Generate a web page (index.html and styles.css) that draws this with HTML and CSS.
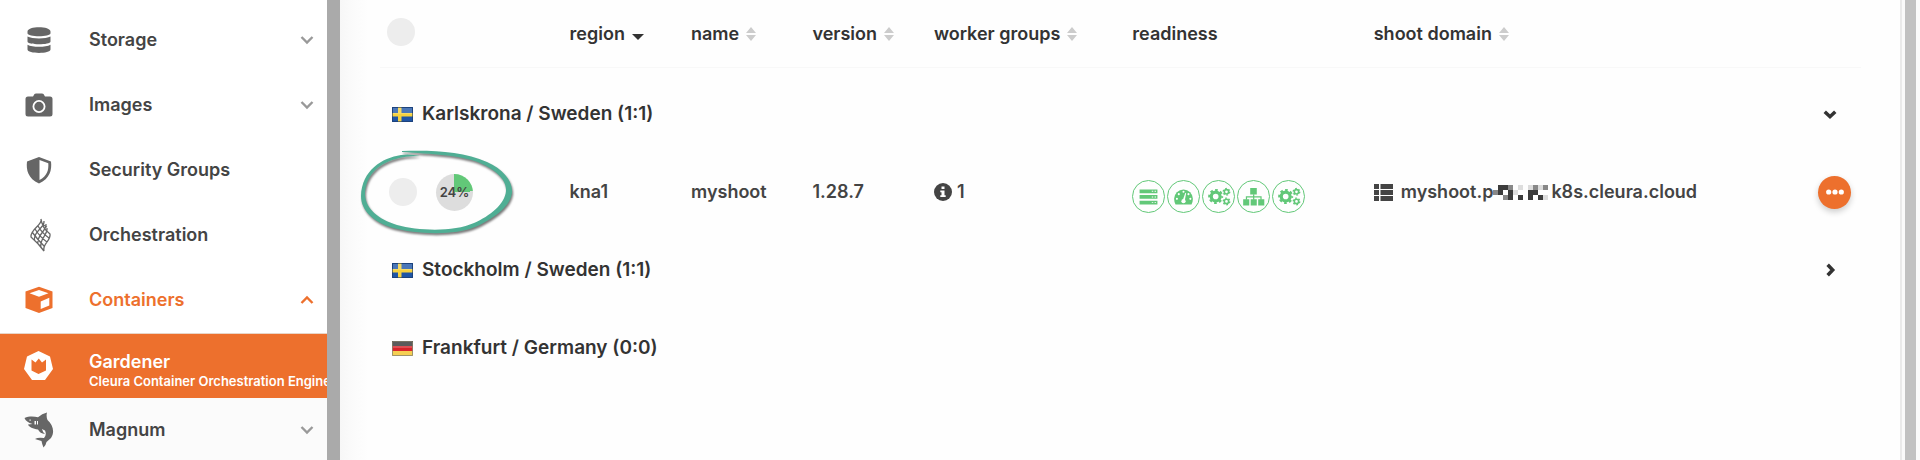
FILE: index.html
```html
<!DOCTYPE html>
<html lang="en">
<head>
<meta charset="utf-8">
<title>Gardener shoots</title>
<link rel="stylesheet" href="styles.css">
</head>
<body>
<svg class="defs" aria-hidden="true">
  <symbol id="chev" viewBox="0 0 14 10"><path d="M1.500 2 7 7.500 12.500 2" fill="none" stroke="currentColor" stroke-width="2.400"/></symbol>
  <symbol id="sort" viewBox="0 0 10 14"><path d="M5 0 10 6H0ZM0 8H10L5 14Z" fill="currentColor"/></symbol>
  <symbol id="se" viewBox="0 0 21 15"><path fill="#1f55a5" d="M0 0h21v15H0z"/><path fill="#f6d23f" d="M6 0h3.500v15H6zM0 6h21v3.500H0z"/><path fill="#fff" opacity=".2" d="M1 1h19v6H1z"/><path fill="none" stroke="#1a3560" stroke-opacity=".6" d="M.5.5h20v14H.5z"/></symbol>
  <symbol id="de" viewBox="0 0 21 15"><path fill="#333" d="M0 0h21v5H0z"/><path fill="#d8232a" d="M0 5h21v5H0z"/><path fill="#f5cf52" d="M0 10h21v5H0z"/><path fill="#fff" opacity=".2" d="M1 1h19v6H1z"/><path fill="none" stroke="#8a8470" stroke-opacity=".8" d="M.5.5h20v14H.5z"/></symbol>
  <symbol id="gears" viewBox="0 0 33 33">
    <g fill="none" stroke="currentColor">
      <circle cx="13.500" cy="16.500" r="4.700" stroke-width="3.400"/><circle cx="13.500" cy="16.500" r="6.800" stroke-width="2.400" stroke-dasharray="2.800 2.540" stroke-dashoffset="1.400"/>
      <circle cx="25" cy="11.500" r="2.300" stroke-width="1.700"/><circle cx="25" cy="11.500" r="3.500" stroke-width="1.400" stroke-dasharray="1.800 1.865"/>
      <circle cx="25" cy="21.800" r="2.300" stroke-width="1.700"/><circle cx="25" cy="21.800" r="3.500" stroke-width="1.400" stroke-dasharray="1.800 1.865"/>
    </g>
  </symbol>
</svg>
<div class="app">
  <nav class="side" aria-label="Services">
    <a class="item" href="#storage"><svg class="ico" viewBox="0 0 30 36"><path d="M3.500 9.500C3.500 3.800 26.500 3.800 26.500 9.500V11.300C26.500 15.300 3.500 15.300 3.500 11.300ZM3.500 14.600C8 17.200 22 17.200 26.500 14.600V19.500C26.500 23.200 3.500 23.200 3.500 19.500ZM3.500 22.700C8 25.500 22 25.500 26.500 22.700V27.500C26.500 32 3.500 32 3.500 27.500Z"/></svg><span class="label">Storage</span><svg class="chev"><use href="#chev"/></svg></a>
    <a class="item" href="#images"><svg class="ico" viewBox="0 0 30 36"><path fill-rule="evenodd" d="M4 9.500H9L10.500 7Q11 6.500 12 6.500H18Q19 6.500 19.500 7L21 9.500H26Q28.500 9.500 28.500 12V27Q28.500 29.500 26 29.500H4Q1.500 29.500 1.500 27V12Q1.500 9.500 4 9.500ZM15 13A6.500 6.500 0 1 0 15 26A6.500 6.500 0 1 0 15 13ZM15 14.800A4.700 4.700 0 1 1 15 24.200A4.700 4.700 0 1 1 15 14.800Z"/></svg><span class="label">Images</span><svg class="chev"><use href="#chev"/></svg></a>
    <a class="item" href="#security"><svg class="ico" viewBox="0 0 30 36"><path fill-rule="evenodd" d="M15 5 27 9.500C28 18 26 26.500 15 31.500C4 26.500 2 18 3 9.500ZM15.500 8V28C23 24 24.800 18.500 24.300 11.300Z"/></svg><span class="label">Security Groups</span></a>
    <a class="item" href="#orchestration"><svg class="ico" viewBox="0 0 30 36"><g fill="none" stroke="currentColor" stroke-width="1.300"><path d="M17 2C19 8 6 12 7 20Q15 27 20 34C18 27 27 24 26 17Q18 11 17 2M20 4C21 11 9 14 10.500 23M22 7C23 14 12 18 14 27M23 11C24 18 15 22 17 30M14 9Q18 16 25 21M11 12Q16 20 23 25M8 15Q14 23 20 29M18 6Q20 9 23 10"/></g></svg><span class="label">Orchestration</span></a>
    <a class="item open" href="#containers"><svg class="ico" viewBox="0 0 30 36"><path fill-rule="evenodd" d="M15 4.800 28.500 9.500V26L15 31 1.500 26V9.500ZM15 8 5.500 11.300 15 14.800 24.500 11.300ZM16.700 19.500V27L25.300 23.500V15.800Z"/></svg><span class="label">Containers</span><svg class="chev up"><use href="#chev"/></svg></a>
    <a class="item active" href="#gardener" aria-current="page"><svg class="ico" viewBox="0 0 30 36"><path fill-rule="evenodd" d="M14.500 3 26 8.500 29 21 21 32H8L0 21 3 8.500ZM7.500 11.500V22.500L14.500 26 22 22.500V11.500L18 14.500 14.800 10.500 11.500 14.500Z"/></svg><span class="label">Gardener<small>Cleura Container Orchestration Engine</small></span></a>
    <a class="item sub" href="#magnum"><svg class="ico" viewBox="0 0 30 36"><path fill-rule="evenodd" d="M.5 6C5 4 10 4.500 14 5.200Q18 1.500 23 .5 22 4 23.500 8C29 13 31 20 27 26L22.500 30Q22 33 19.500 35.500 18 32 17.500 29Q14 28 11 27Q14 25 20 26Q23 23 21 18.500L18 17Q18.500 20 21 22 16 21.500 14 17.500C9 17 5 15 4 12.500L8.500 12Q2 10 .5 6ZM10.500 9V12.500H12V9ZM13 9V12.500H14V9ZM5.500 7.500V8.700H6.700V7.500Z"/></svg><span class="label">Magnum</span><svg class="chev"><use href="#chev"/></svg></a>
  </nav>
  <div class="bar"></div>
  <main class="main">
    <table class="shoots">
      <colgroup><col class="c-sel"><col class="c-s"><col class="c-s"><col class="c-s"><col class="c-wg"><col class="c-rd"><col><col class="c-act"></colgroup>
      <thead>
        <tr>
          <th class="sel"><input type="checkbox" class="tick" aria-label="Select all"></th>
          <th><button class="sort on">region<svg class="caret" viewBox="0 0 12 6"><path d="M0 0H12L6 6Z" fill="currentColor"/></svg></button></th>
          <th><button class="sort">name<svg><use href="#sort"/></svg></button></th>
          <th><button class="sort">version<svg><use href="#sort"/></svg></button></th>
          <th><button class="sort">worker groups<svg><use href="#sort"/></svg></button></th>
          <th>readiness</th>
          <th><button class="sort">shoot domain<svg><use href="#sort"/></svg></button></th>
          <th></th>
        </tr>
      </thead>
      <tbody>
        <tr class="spacer"><td colspan="8"></td></tr>
        <tr class="group">
          <td colspan="7"><div class="place"><svg class="flag"><use href="#se"/></svg>Karlskrona / Sweden (1:1)</div></td>
          <td><button class="toggle" aria-label="Collapse Karlskrona"><svg viewBox="0 0 12 12"><path d="M1.500 4 6 8.300 10.500 4"/></svg></button></td>
        </tr>
        <tr class="shoot">
          <td class="sel"><div class="status"><input type="checkbox" class="tick" aria-label="Select myshoot"><span class="pie">24%</span>
            <svg class="mark" viewBox="0 0 156 90"><path fill="#4fae94" d="M42 3C70 2 103 3 127 14C143 21 153 33 152 45C150 60 131 72 115 79C94 88 55 86 33 80C13 74 1 62 1 48C2 22 22 10 41 7Q49 5.500 60 8Q44 8 36 11C17 16 5 29 5 47C6 61 18 71 37 77C59 83 94 84 114 75C130 68 145 56 146 43C147 31 134 21 120 15C101 7 70 6 42 4Z"/></svg></div></td>
          <td>kna1</td>
          <td>myshoot</td>
          <td>1.28.7</td>
          <td><div class="row tight"><svg class="info" viewBox="0 0 18 18"><circle cx="9" cy="9" r="9" fill="currentColor"/><path fill="#fff" d="M7.500 3.500h3v2.500h-3zM6.300 7.500h4.200v4.700h1.200V14H6.300v-1.800h1.200V9.300H6.300z"/></svg>1</div></td>
          <td><div class="ready">
            <svg viewBox="0 0 33 33"><path fill="currentColor" fill-rule="evenodd" d="M7 9h19v4H7zM7 15h19v4H7zM7 21h19v4H7zM20 10.500v1h1.500v-1zM23 10.500v1h1.500v-1zM20 16.500v1h1.500v-1zM23 16.500v1h1.500v-1zM20 22.500v1h1.500v-1zM23 22.500v1h1.500v-1z"/></svg>
            <svg viewBox="0 0 33 33"><path fill="currentColor" d="M8 25Q6.500 22 6.500 19A10 10 0 0 1 26.500 19Q26.500 22 25 25Z"/><g fill="#fff"><circle cx="9.500" cy="19" r="1.100"/><circle cx="11.500" cy="14" r="1.100"/><circle cx="16.500" cy="11.500" r="1.100"/><circle cx="21.800" cy="14" r="1.100"/><circle cx="23.800" cy="19" r="1.100"/><circle cx="16.500" cy="21.500" r="2.300"/><path d="M15.500 21 18.500 12.500 19.300 13 17.700 21.500Z"/></g></svg>
            <svg><use href="#gears"/></svg>
            <svg viewBox="0 0 33 33"><path fill="currentColor" d="M13 7.500h7v7h-7zM5.500 19.500h6.500V26H5.500zM13.500 19.500h6.500V26h-6.500zM21.500 19.500h6.500V26h-6.500z"/><path fill="none" stroke="currentColor" stroke-width="1.300" d="M16.700 14v6M9 20v-3.200h15.500V20"/></svg>
            <svg><use href="#gears"/></svg>
          </div></td>
          <td><div class="row"><svg class="list" viewBox="0 0 19 17"><path fill="currentColor" d="M0 0h5v5H0zM6.500 0H19v5H6.500zM0 6h5v5H0zM6.500 6H19v5H6.500zM0 12h5v5H0zM6.500 12H19v5H6.500z"/></svg><span class="host">myshoot.p<svg class="mosaic" viewBox="0 0 55 15" shape-rendering="crispEdges"><path fill="#3c3c3c" d="M5 0h10v5H5zM5 5h5v5H5zM15 5h5v10h-5zM35 5h10v5H35zM35 10h5v5h-5zM45 10h5v5h-5zM25 10h5v5h-5z"/><path fill="#888" d="M0 5h5v5H0zM15 0h5v5h-5zM10 10h5v5h-5zM40 0h5v5h-5zM50 0h5v5h-5z"/><path fill="#ddd" d="M25 0h5v5h-5zM20 5h5v5h-5zM35 0h5v5h-5zM45 0h5v5h-5zM50 10h5v5h-5z"/></svg>k8s.cleura.cloud</span></div></td>
          <td><button class="more" aria-label="Actions"><svg viewBox="0 0 18 6"><g fill="#fff"><circle cx="2.700" cy="3" r="2.600"/><circle cx="9" cy="3" r="2.600"/><circle cx="15.300" cy="3" r="2.600"/></g></svg></button></td>
        </tr>
        <tr class="group">
          <td colspan="7"><div class="place"><svg class="flag"><use href="#se"/></svg>Stockholm / Sweden (1:1)</div></td>
          <td><button class="toggle" aria-label="Expand Stockholm"><svg viewBox="0 0 12 12"><path d="M4 1.500 8.300 6 4 10.500"/></svg></button></td>
        </tr>
        <tr class="group">
          <td colspan="8"><div class="place"><svg class="flag"><use href="#de"/></svg>Frankfurt / Germany (0:0)</div></td>
        </tr>
      </tbody>
    </table>
  </main>
  <div class="track"><div class="thumb"></div></div>
</div>
</body>
</html>
```
FILE: styles.css
```css
* { box-sizing: border-box; }
body {
  margin: 0;
  background: #fff;
  color: #333;
  font: 600 18px/24px Inter, "Liberation Sans", sans-serif;
}
button { font: inherit; color: inherit; background: none; border: 0; padding: 0; cursor: pointer; }
svg { display: block; flex: none; }
.defs { display: none; }
.app { display: flex; min-height: 100vh; }

.side { width: 327px; flex: none; padding-top: 7px; overflow: hidden; }
.item {
  display: flex;
  align-items: center;
  gap: 35px;
  height: 65px;
  padding: 0 13px 0 24px;
  color: #444;
  text-decoration: none;
  white-space: nowrap;
}
.label { flex: 1; min-width: 0; }
.label small { display: block; font-size: 13px; line-height: 14px; }
.ico { width: 30px; height: 36px; fill: currentColor; color: #666; }
.chev { width: 14px; height: 10px; color: #999; }
.open { height: 66px; }
.open, .open .ico, .open .chev { color: #ed702d; }
.up { transform: rotate(180deg); }
.active { border-top: 1px solid #e8d5c8; background: #ed702d; color: #fff; }
.active .label { padding-top: 6px; }
.active .ico { color: #fff; }
.sub { height: 62px; padding-top: 2px; background: #fbfbfb; }

.bar { width: 13px; flex: none; background: #aaa; }
.main {
  flex: 1;
  min-width: 0;
  padding: 0 39px 0 40px;
  background: linear-gradient(90deg, #f7f7f7, #fbfbfb 14px, #fefefe 28px);
  border-right: 2px solid #eaeaea;
}
.track { width: 18px; flex: none; padding: 0 4px 0 3px; background: #fafafa; }
.thumb { height: 100%; background: #c1c1c1; }

.shoots { width: 100%; table-layout: fixed; border-collapse: collapse; }
.shoots th, .shoots td { padding: 0; font-weight: 600; text-align: left; white-space: nowrap; }
.shoots th { height: 67px; padding-top: 1px; border-bottom: 1px solid #f8f8f8; }
.shoots th.sel { padding-top: 0; padding-bottom: 2px; }
.c-sel { width: 12.8%; }
.c-s { width: 8.2%; }
.c-wg { width: 13.4%; }
.c-rd { width: 16.3%; }
.c-act { width: 48px; }
.shoots .sel { padding-left: 7px; }
.tick { appearance: none; display: block; width: 28px; height: 28px; margin: 0; border-radius: 50%; background: #ededed; }
.sort { display: flex; align-items: center; gap: 7px; }
.sort svg { width: 10px; height: 14px; color: #ccc; }
.sort .caret { width: 12px; height: 6px; margin-top: 6px; color: #333; }

.spacer td { height: 8px; }
.group td, .shoot td { height: 78px; }
.shoot { color: #444; }
.place { display: flex; align-items: center; gap: 9px; padding-left: 12px; font-size: 19px; }
.flag { width: 21px; height: 15px; }
.toggle { display: block; padding: 10px; }
.toggle svg { width: 14px; height: 14px; fill: none; stroke: #333; stroke-width: 3; }
.status { position: relative; display: flex; align-items: center; gap: 19px; padding-left: 2px; }
.pie {
  width: 37px;
  border-radius: 50%;
  background: conic-gradient(#62c878 24%, #ddd 0);
  font-size: 13px;
  line-height: 37px;
  text-align: center;
}
.mark { position: absolute; left: -27px; top: -26px; width: 156px; height: 90px; filter: drop-shadow(1px 2px 1px #0008); pointer-events: none; }
.row { display: flex; align-items: center; gap: 8px; }
.tight { gap: 5px; }
.info { width: 18px; height: 18px; }
.list { width: 19px; height: 17px; }
.host { display: flex; align-items: center; }
.mosaic { width: 55px; height: 15px; margin-right: 3px; }
.ready { display: flex; gap: 2px; padding-top: 8px; color: #62c878; }
.ready svg { width: 33px; height: 33px; border: 1px solid; border-radius: 50%; }
.more {
  display: flex;
  align-items: center;
  justify-content: center;
  width: 33px;
  height: 33px;
  margin-left: 5px;
  border-radius: 50%;
  background: #ed702d;
  box-shadow: 0 3px 6px #0003;
}
.more svg { width: 18px; height: 6px; }
```
